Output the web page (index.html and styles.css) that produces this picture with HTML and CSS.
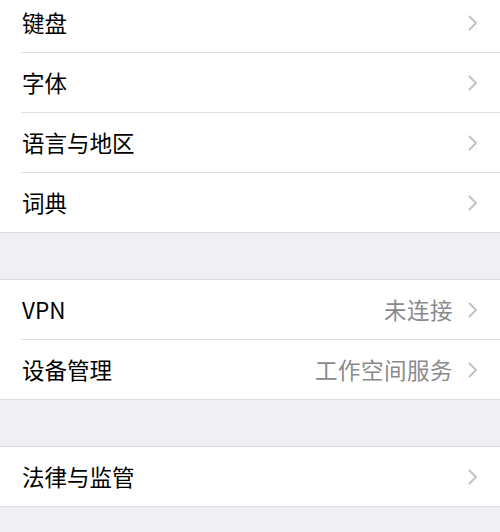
FILE: index.html
```html
<!DOCTYPE html>
<html lang="zh-CN">
<head>
<meta charset="utf-8">
<link rel="stylesheet" href="styles.css">
</head>
<body>
<div class="page">
  <div class="group first">
    <div class="row"><span class="label">键盘</span><span class="right"><svg class="chev" viewBox="0 0 10 16"><path d="M1.5 1.5 L8 8 L1.5 14.5"/></svg></span></div>
    <div class="row"><span class="label">字体</span><span class="right"><svg class="chev" viewBox="0 0 10 16"><path d="M1.5 1.5 L8 8 L1.5 14.5"/></svg></span></div>
    <div class="row"><span class="label">语言与地区</span><span class="right"><svg class="chev" viewBox="0 0 10 16"><path d="M1.5 1.5 L8 8 L1.5 14.5"/></svg></span></div>
    <div class="row last"><span class="label">词典</span><span class="right"><svg class="chev" viewBox="0 0 10 16"><path d="M1.5 1.5 L8 8 L1.5 14.5"/></svg></span></div>
  </div>
  <div class="gap"></div>
  <div class="group">
    <div class="row"><span class="label">VPN</span><span class="right"><span class="value">未连接</span><svg class="chev" viewBox="0 0 10 16"><path d="M1.5 1.5 L8 8 L1.5 14.5"/></svg></span></div>
    <div class="row last"><span class="label">设备管理</span><span class="right"><span class="value">工作空间服务</span><svg class="chev" viewBox="0 0 10 16"><path d="M1.5 1.5 L8 8 L1.5 14.5"/></svg></span></div>
  </div>
  <div class="gap"></div>
  <div class="group">
    <div class="row last"><span class="label">法律与监管</span><span class="right"><svg class="chev" viewBox="0 0 10 16"><path d="M1.5 1.5 L8 8 L1.5 14.5"/></svg></span></div>
  </div>
</div>
</body>
</html>
```

FILE: styles.css
```css
html, body {
  margin: 0;
  padding: 0;
  background: #efeff4;
  height: 532px;
  overflow: hidden;
}
.page {
  font-family: "Noto Sans CJK SC", "Noto Sans", sans-serif;
  color: #000;
  display: flex;
  flex-direction: column;
}
.group {
  background: #fff;
  border-top: 1px solid #dcdce0;
  border-bottom: 1px solid #dcdce0;
  display: flex;
  flex-direction: column;
}
.group.first {
  margin-top: -7px;
  border-top: none;
}
.gap {
  height: 46px;
}
.row {
  height: 60px;
  margin-left: 21px;
  padding-right: 22px;
  display: flex;
  align-items: center;
  justify-content: space-between;
  border-bottom: 1px solid #e0e0e3;
  box-sizing: border-box;
}
.row.last {
  border-bottom: none;
  height: 59px;
}
.label {
  font-size: 22.5px;
  line-height: 1;
  padding-left: 1px;
  padding-top: 0;
}
.right {
  display: flex;
  align-items: center;
  gap: 15px;
}
.value {
  font-size: 22.5px;
  line-height: 1;
  color: #8a8a8e;
  letter-spacing: 0.5px;
  padding-top: 0;
}
.chev {
  width: 10px;
  height: 16px;
  fill: none;
  stroke: #c4c4c8;
  stroke-width: 2;
  stroke-linecap: round;
  stroke-linejoin: round;
}
```
